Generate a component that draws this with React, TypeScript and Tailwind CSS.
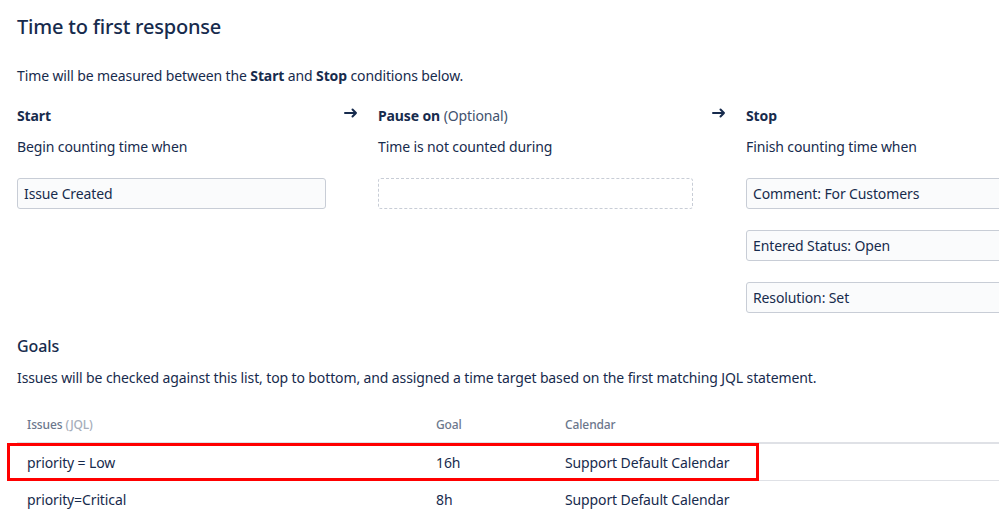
import React from 'react'

const font = { fontFamily: '"Noto Sans", "Open Sans", sans-serif' }

function Field({ children }: { children?: React.ReactNode }) {
  return (
    <div className="h-[31px] flex items-center px-[6px] bg-[#fafbfc] border border-[#c8cdd6] rounded-[3px] text-[14px] text-[#172b4d]">
      {children}
    </div>
  )
}

function Arrow({ wide }: { wide?: boolean }) {
  return (
    <div className={wide ? 'w-[53px] pl-[19px] pt-[2px]' : 'w-[52px] pl-[18px] pt-[2px]'}>
      <svg width="14" height="10" viewBox="0 0 14 10" fill="none" stroke="#172b4d" strokeWidth="2" strokeLinecap="round" strokeLinejoin="round">
        <path d="M1 5h11M8.5 1.5L12 5l-3.5 3.5" />
      </svg>
    </div>
  )
}

const rows = [
  { jql: 'priority = Low', goal: '16h', cal: 'Support Default Calendar', marked: true },
  { jql: 'priority=Critical', goal: '8h', cal: 'Support Default Calendar', marked: false },
]

export default function App() {
  return (
    <div className="w-[999px] h-[517px] overflow-hidden bg-white text-[#172b4d] tracking-[-0.12px]" style={font}>
      <div className="pl-[17px] pt-[14px]">
        <h1 className="text-[20px] leading-[26px] font-medium tracking-[-0.2px]">Time to first response</h1>
        <p className="mt-[26px] text-[14px] leading-[20px]">
          Time will be measured between the <b>Start</b> and <b>Stop</b> conditions below.
        </p>

        <div className="mt-[20px] flex w-[1100px]">
          <div className="w-[309px]">
            <div className="text-[14px] leading-[20px] font-bold">Start</div>
            <div className="mt-[11px] text-[14px] leading-[20px]">Begin counting time when</div>
            <div className="mt-[21px]">
              <Field>Issue Created</Field>
            </div>
          </div>
          <Arrow />
          <div className="w-[315px]">
            <div className="text-[14px] leading-[20px]">
              <b>Pause on</b> <span className="text-[#42526e]">(Optional)</span>
            </div>
            <div className="mt-[11px] text-[14px] leading-[20px]">Time is not counted during</div>
            <div className="mt-[21px] h-[31px] border border-dashed border-[#c8cdd6] rounded-[3px]" />
          </div>
          <Arrow wide />
          <div className="w-[315px]">
            <div className="text-[14px] leading-[20px] font-bold">Stop</div>
            <div className="mt-[11px] text-[14px] leading-[20px]">Finish counting time when</div>
            <div className="mt-[21px] flex flex-col gap-[21px]">
              <Field>Comment: For Customers</Field>
              <Field>Entered Status: Open</Field>
              <Field>Resolution: Set</Field>
            </div>
          </div>
        </div>

        <h2 className="mt-[22px] text-[16px] leading-[22px] font-medium">Goals</h2>
        <p className="mt-[11px] text-[14px] leading-[20px]">
          Issues will be checked against this list, top to bottom, and assigned a time target based on the first matching JQL statement.
        </p>

        <div className="mt-[29px] relative">
          <div className="grid grid-cols-[419px_129px_1fr] pb-[9px] leading-[16px] border-b-2 border-[#dfe1e6] text-[12px] text-[#6b778c] font-medium">
            <div className="pl-[10px]">
              Issues <span className="text-[#a5adba]">(JQL)</span>
            </div>
            <div>Goal</div>
            <div>Calendar</div>
          </div>
          {rows.map((r) => (
            <div
              key={r.jql}
              className="relative grid grid-cols-[419px_129px_1fr] h-[37px] items-center border-b border-[#dfe1e6] text-[14px]"
            >
              <div className="pl-[10px]">{r.jql}</div>
              <div>{r.goal}</div>
              <div>{r.cal}</div>
              {r.marked && (
                <div className="absolute left-[-10px] top-[-1px] w-[752px] h-[38px] border-[3px] border-[#ff0000]" />
              )}
            </div>
          ))}
        </div>
      </div>
    </div>
  )
}
